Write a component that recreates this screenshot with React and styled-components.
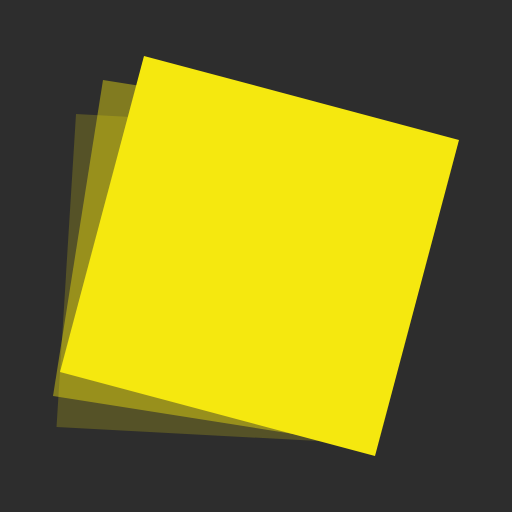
import React from "react";
import styled, { createGlobalStyle } from "styled-components";

const Global = createGlobalStyle`
  html, body { margin: 0; padding: 0; background: #2d2d2d; }
`;

const Page = styled.main`
  width: 512px;
  height: 512px;
  display: flex;
  background: #2d2d2d;
  overflow: hidden;
`;

const Logo = styled.svg`
  display: block;
  width: 512px;
  height: 512px;
`;

const Sheet = styled.polygon`
  fill: #f5e80f;
  fill-opacity: ${(p) => p.$opacity};
`;

export default function App() {
  return (
    <Page>
      <Global />
      <Logo viewBox="0 0 512 512" role="img" aria-label="Stack of yellow sheets">
        <Sheet $opacity={0.2} points="76,114 390,131 373,444 56.5,427" />
        <Sheet $opacity={0.42} points="103,80 419,130 369,446 53,396" />
        <Sheet $opacity={1} points="144,56 459,140 375,456 60,372" />
      </Logo>
    </Page>
  );
}
